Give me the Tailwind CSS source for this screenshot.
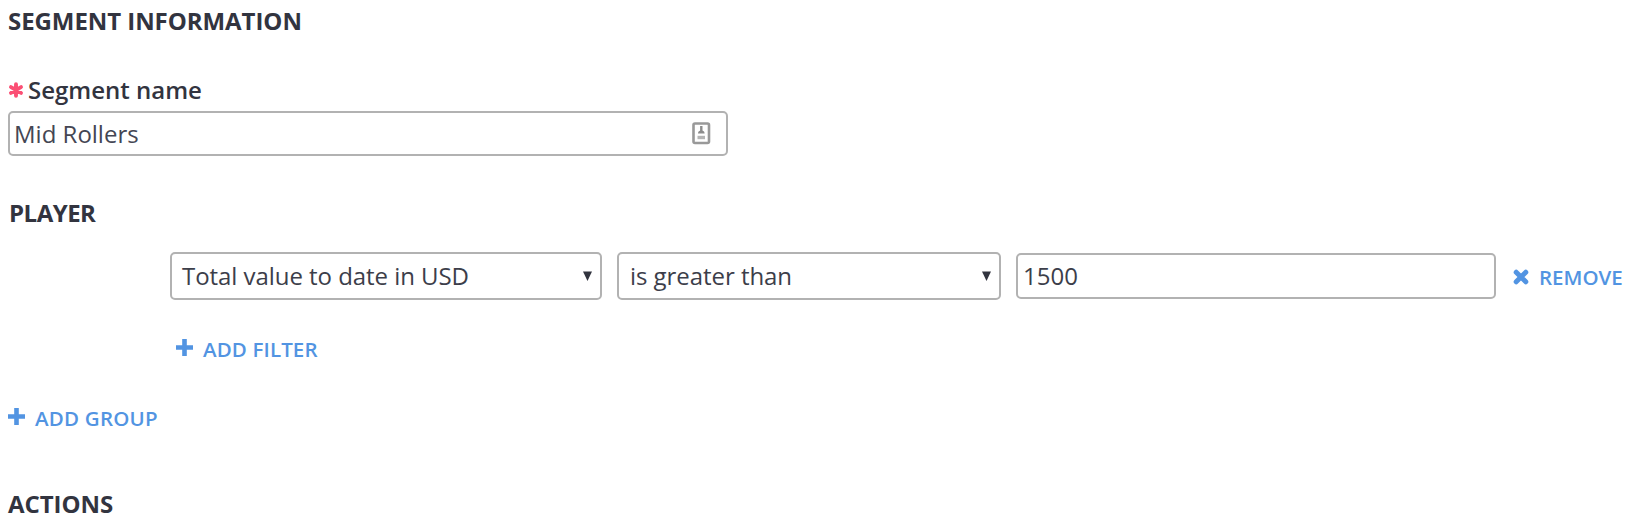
<!DOCTYPE html>
<html lang="en">
<head>
<meta charset="utf-8">
<title>Segment</title>
<script src="https://cdn.jsdelivr.net/npm/@tailwindcss/browser@4"></script>
</head>
<body class="bg-white overflow-hidden">
<main class="h-[527px] w-[1652px] pl-2 pt-[5px] font-['Open_Sans','Noto_Sans',sans-serif] text-[24px] leading-8 text-[#32343f] whitespace-nowrap">
  <h2 class="h-8 font-bold tracking-[-0.06px]">SEGMENT INFORMATION</h2>
  <label class="mt-[37px] flex h-8 items-center gap-[4px] font-semibold">
    <svg class="h-4 w-4 shrink-0" viewBox="0 0 16 16" stroke="#fb4f74" stroke-width="3.9" stroke-linecap="round"><path d="M8 2.3v11.4M3 5.1l10 5.8M13 5.1L3 10.9"/></svg>
    <span>Segment name</span>
  </label>
  <div class="mt-[5px] flex h-[45px] w-[720px] items-center justify-between rounded-[5px] border-2 border-[#b2b2b2] pl-1 pr-[15px]">
    <span class="text-[#444653]">Mid Rollers</span>
    <svg class="h-[23px] w-[19px]" viewBox="0 0 19 23"><rect x="1.5" y="1.5" width="15.5" height="19.5" rx="1.5" fill="#fff" stroke="#999" stroke-width="2.6"/><path d="M9.3 4v5" stroke="#8c8c8c" stroke-width="2.4"/><path d="M6 11.5q0-2.7 3.3-3.3 3.3.6 3.3 3.3z" fill="#8c8c8c"/><path d="M5.5 15.5h7.5" stroke="#b5b5b5" stroke-width="3.4"/></svg>
  </div>
  <h2 class="mt-[41px] h-8 pl-px font-bold tracking-[-0.5px]">PLAYER</h2>
  <div class="ml-[162px] mt-[23px] flex h-12 items-center">
    <div class="flex h-12 w-[432px] items-center justify-between rounded-[5px] border-2 border-[#b2b2b2] pl-[10px] pr-2">
      <span class="tracking-[-0.05px] text-[#3c3e4a]">Total value to date in USD</span>
      <svg class="h-[10px] w-[9px]" viewBox="0 0 9 10"><path d="M0 .5h9L4.5 10z" fill="#32343f"/></svg>
    </div>
    <div class="ml-[15px] flex h-12 w-[384px] items-center justify-between rounded-[5px] border-2 border-[#b2b2b2] pl-[11px] pr-2">
      <span class="tracking-[-0.05px] text-[#3c3e4a]">is greater than</span>
      <svg class="h-[10px] w-[9px]" viewBox="0 0 9 10"><path d="M0 .5h9L4.5 10z" fill="#32343f"/></svg>
    </div>
    <div class="ml-[15px] flex h-[46px] w-[480px] items-center rounded-[5px] border-2 border-[#b2b2b2] pl-[5px] text-[#3c3e4a]">1500</div>
    <a class="ml-[17px] flex h-8 items-center gap-[10px] pt-[2px] text-[20.5px] font-semibold text-[#5294e2]">
      <svg class="h-4 w-4" viewBox="0 0 16 16"><path d="M3.2 3.2l9.6 9.6M12.8 3.2L3.2 12.8" stroke="#5294e2" stroke-width="5" stroke-linecap="square" stroke-linejoin="round" class="[stroke-linecap:round]"/></svg>
      <span>REMOVE</span>
    </a>
  </div>
  <a class="ml-[168px] mt-[33px] flex h-8 items-center gap-[10px] text-[20.5px] font-semibold tracking-[0.13px] text-[#5294e2]">
    <svg class="mb-[3px] h-[17px] w-[17px]" viewBox="0 0 17 17"><path d="M8.5 0v17M0 8.5h17" stroke="#5294e2" stroke-width="4.6"/></svg>
    <span>ADD FILTER</span>
  </a>
  <a class="mt-[37px] flex h-8 items-center gap-[10px] text-[20.5px] font-semibold tracking-[0.22px] text-[#5294e2]">
    <svg class="mb-[3px] h-[17px] w-[17px]" viewBox="0 0 17 17"><path d="M8.5 0v17M0 8.5h17" stroke="#5294e2" stroke-width="4.6"/></svg>
    <span>ADD GROUP</span>
  </a>
  <h2 class="mt-[54px] h-8 font-bold tracking-[-0.06px]">ACTIONS</h2>
</main>
</body>
</html>
